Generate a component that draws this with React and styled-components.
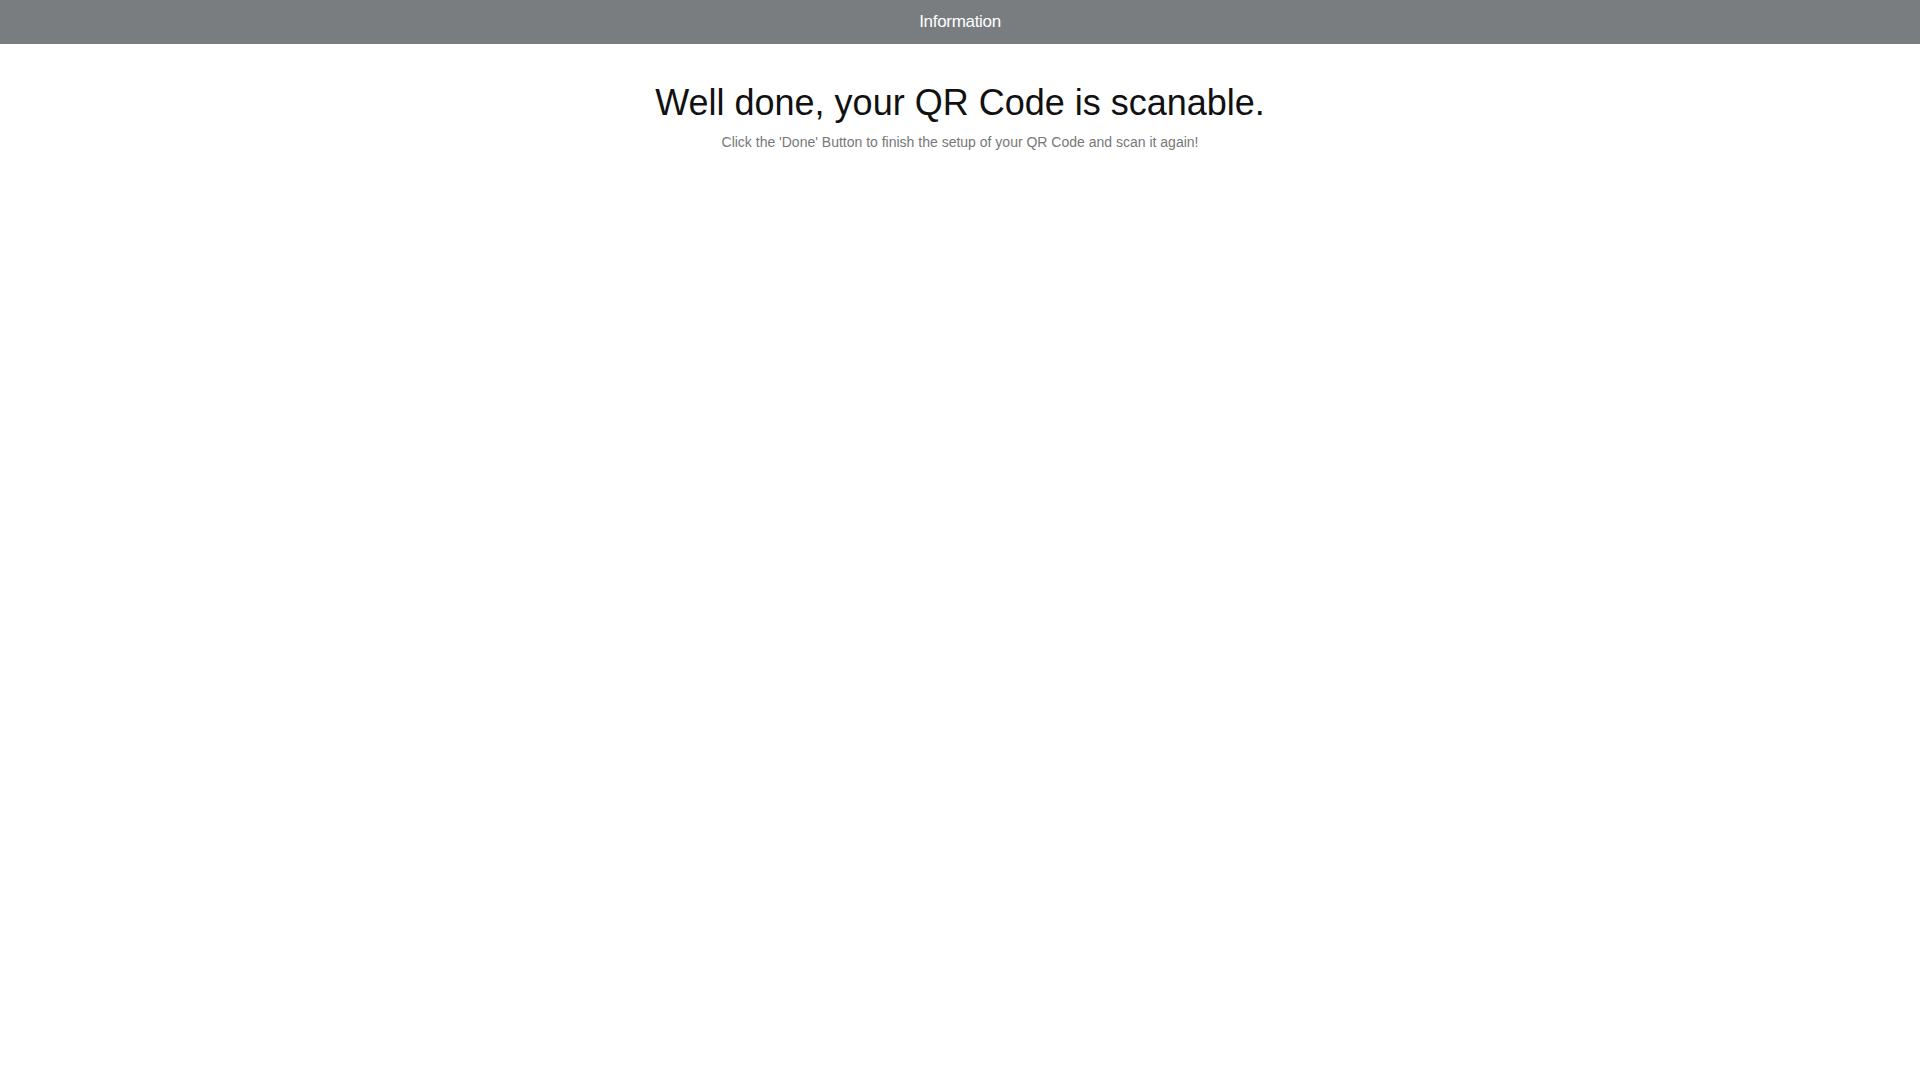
import React from "react";
import styled, { createGlobalStyle } from "styled-components";

const GlobalStyle = createGlobalStyle`
  html, body {
    margin: 0;
    padding: 0;
    background: #ffffff;
    font-family: "Liberation Sans", Arial, sans-serif;
  }
`

const Header = styled.header`
  height: 44px;
  background: #7a7d80;
  display: flex;
  align-items: center;
  justify-content: center;
`

const HeaderTitle = styled.span`
  color: #ffffff;
  font-size: 17px;
  letter-spacing: -0.3px;
`

const Content = styled.main`
  display: flex;
  flex-direction: column;
  align-items: center;
  padding-top: 38px;
`

const Title = styled.h1`
  margin: 0;
  color: #111111;
  font-size: 36px;
  font-weight: 400;
  line-height: 42px;
`

const Subtitle = styled.p`
  margin: 9px 0 0;
  color: #777777;
  font-size: 14px;
  line-height: 18px;
`

export default function App() {
  return (
    <>
      <GlobalStyle />
      <Header>
        <HeaderTitle>Information</HeaderTitle>
      </Header>
      <Content>
        <Title>Well done, your QR Code is scanable.</Title>
        <Subtitle>Click the 'Done' Button to finish the setup of your QR Code and scan it again!</Subtitle>
      </Content>
    </>
  )
}
